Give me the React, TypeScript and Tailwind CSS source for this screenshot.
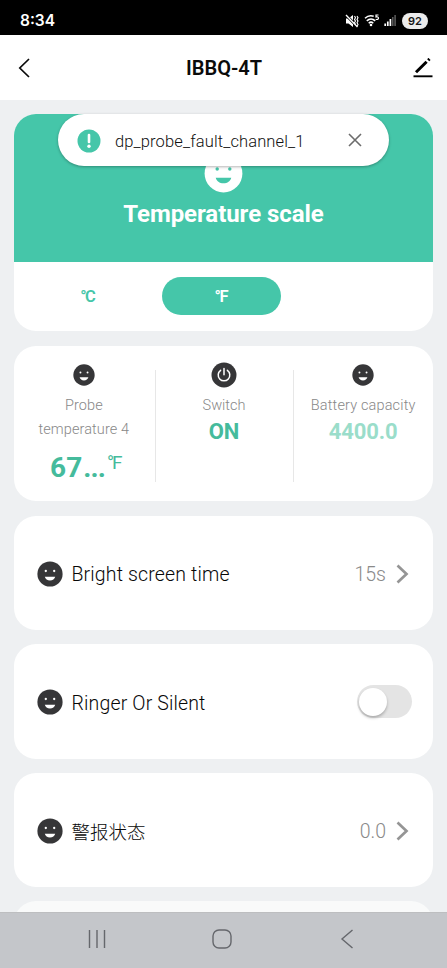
import React from "react";

function Smiley({ size, face = "#fff", fill = "#363638" }: { size: number; face?: string; fill?: string }) {
  return (
    <svg width={size} height={size} viewBox="0 0 26 26" className="block shrink-0">
      <circle cx="13" cy="13" r="12.6" fill={fill} />
      <circle cx="8.8" cy="10" r="1.15" fill={face} />
      <circle cx="17.2" cy="10" r="1.15" fill={face} />
      <path d="M7.8 15.800h10.400c-.6 2.300-2.500 3.700-5.200 3.700s-4.600-1.400-5.200-3.700z" fill={face} />
    </svg>
  );
}

function StatusBar() {
  return (
    <div className="flex h-[35px] items-center justify-between bg-black pt-[6px] pr-[19px] pl-[20px] text-white">
      <span className="font-['Inter',sans-serif] text-[15.500px] leading-5 font-semibold">8:34</span>
      <div className="flex items-center">
        <svg width="14" height="14" viewBox="0 0 14 14" className="mr-[5px]">
          <path d="M1 4.500h2.500L8 1v12L3.500 9.500H1z" fill="#fff" />
          <path d="M1 1l11.500 12" stroke="#000" strokeWidth="2.600" />
          <path d="M1 1l11.500 12" stroke="#fff" strokeWidth="1.400" />
          <path d="M9.500 2l1 1.700-1 1.700 1 1.700-1 1.700 1 1.700M12 2l1 1.700-1 1.700 1 1.700-1 1.700 1 1.700-1 1.700" fill="none" stroke="#fff" strokeWidth="1.100" />
        </svg>
        <svg width="16" height="13" viewBox="0 0 16 13" className="mr-[4px]">
          <path d="M1 4.300C3.800 1.500 7 1.200 9.700 2.200M2.800 6.900c2.500-2.400 6-2.400 8.400 0M4.700 9.200c1.400-1.300 3.200-1.300 4.600 0" fill="none" stroke="#fff" strokeWidth="1.500" />
          <circle cx="7" cy="11" r="1.300" fill="#fff" />
          <path d="M14.500 1H12v2c1.500-.5 2.500 0 2.500 1.200S13 5.800 11.700 5.200" fill="none" stroke="#fff" strokeWidth="1.200" />
        </svg>
        <svg width="12" height="13" viewBox="0 0 12 13" className="mr-[6px]">
          <path d="M1.200 12V9.500M3.800 12V7.500M6.400 12V5" stroke="#fff" strokeWidth="1.700" />
          <path d="M8.800 12V3M11.100 12V1" stroke="#5c5c5c" strokeWidth="1.500" />
        </svg>
        <span className="flex h-[16px] w-[26px] items-center justify-center rounded-full bg-[#ececec] pt-px font-['Inter',sans-serif] text-[11px] font-semibold text-[#161616]">92</span>
      </div>
    </div>
  );
}

function Header() {
  return (
    <header className="flex h-[65px] items-center justify-between bg-white pr-[14px] pl-[17px]">
      <svg width="20" height="20" viewBox="0 0 20 20" fill="none" stroke="#0a0a0a" strokeWidth="1.700">
        <path d="M12 1L2.800 10 12 19" />
      </svg>
      <h1 className="mr-[2px] text-[20px] leading-6 font-semibold text-[#0b0b0b]">IBBQ-4T</h1>
      <svg width="20" height="20" viewBox="0 0 20 20" fill="none" stroke="#000">
        <path d="M3 14.200L13.600 3.800M15.200 2.200l1.300-1.300" strokeWidth="3" />
        <path d="M0.500 18.300h19" strokeWidth="1.900" />
      </svg>
    </header>
  );
}

function Toast() {
  return (
    <div className="absolute top-[114px] left-[58px] flex h-[52px] w-[331px] items-center rounded-full bg-white pr-[27px] pl-[19px] shadow-[0_1px_3px_rgba(0,0,0,0.3)]">
      <svg width="24" height="24" viewBox="0 0 24 24" className="mt-[2px]">
        <circle cx="12" cy="12" r="11.500" fill="#45c6a9" />
        <path d="M12 6v7" stroke="#fff" strokeWidth="2.600" strokeLinecap="round" />
        <circle cx="12" cy="17.300" r="1.700" fill="#fff" />
      </svg>
      <span className="mt-[4px] ml-[14px] flex-1 text-[16.500px] font-light tracking-[0.120px] whitespace-nowrap text-[#111]">dp_probe_fault_channel_1</span>
      <svg width="14" height="14" viewBox="0 0 14 14" stroke="#6c6c6c" strokeWidth="1.600">
        <path d="M1 1l12 12M13 1L1 13" />
      </svg>
    </div>
  );
}

function ScaleCard() {
  return (
    <section className="h-[217px] overflow-hidden rounded-[22px] bg-white">
      <div className="flex h-[148px] flex-col items-center bg-[#45c6a9] pt-[40px]">
        <Smiley size={39} fill="#fff" face="#45c6a9" />
        <h2 className="mt-[6px] text-[24px] leading-[30px] font-bold tracking-[-0.050px] text-white">Temperature scale</h2>
      </div>
      <div className="flex pt-[15px] pl-[14px] text-[16.500px] font-semibold">
        <button className="h-[38px] w-[120px] pt-[2px] text-[#45c6a9]"><span className="tracking-[-1.500px]">°</span>C</button>
        <button className="ml-[14px] h-[38px] w-[119px] rounded-full bg-[#45c6a9] pt-[2px] text-white"><span className="tracking-[-1.500px]">°</span>F</button>
      </div>
    </section>
  );
}

function Readings() {
  return (
    <section className="mt-[15px] grid h-[155px] grid-cols-3 rounded-[22px] bg-white text-center text-[14.500px] leading-6 font-light text-[#888]">
      <div className="flex flex-col items-center pt-[18px]">
        <Smiley size={22} />
        <div className="mt-[8px] tracking-[0.100px]">Probe<br />temperature 4</div>
        <div className="mt-[8px] flex items-start pl-[5px] text-[#45bb9c]">
          <span className="text-[28px] leading-[36px] font-bold">67<span className="ml-[1px] tracking-[-0.900px]">...</span></span>
          <span className="ml-[2px] pt-[1px] text-[19px] leading-6 font-normal"><span className="tracking-[-2px]">°</span>F</span>
        </div>
      </div>
      <div className="mt-[24px] mb-[19px] ml-px -mr-px flex flex-col items-center border-x border-[#e7e7e7]">
        <svg width="26" height="26" viewBox="0 0 26 26" className="-mt-[8px] shrink-0" fill="none" stroke="#fff" strokeWidth="1.500" strokeLinecap="round">
          <circle cx="13" cy="13" r="12.500" fill="#363638" stroke="none" />
          <path d="M9.600 8.300a5.800 5.800 0 1 0 6.800 0M13 6.500v6.200" />
        </svg>
        <div className="mt-[6px] mr-px">Switch</div>
        <div className="mt-0 mr-px text-[22px] leading-[28px] font-bold text-[#45bb9c]">ON</div>
      </div>
      <div className="flex flex-col items-center pt-[18px]">
        <Smiley size={22} />
        <div className="mt-[8px] tracking-[0.150px] whitespace-nowrap">Battery capacity</div>
        <div className="mt-0 text-[22px] leading-[28px] font-bold tracking-[-0.100px] text-[#9addca]">4400.0</div>
      </div>
    </section>
  );
}

function Row({ label, children, className = "", labelClass = "mt-[2px] text-[19.500px] font-light tracking-[0.150px]" }: { label: string; children: React.ReactNode; className?: string; labelClass?: string }) {
  return (
    <section className={"flex h-[114.500px] items-center rounded-[22px] bg-white pt-[2px] pr-[21px] pl-[23px] " + className}>
      <Smiley size={26} />
      <span className={"ml-[8.500px] flex-1 text-[#080808] " + labelClass}>{label}</span>
      {children}
    </section>
  );
}

function Value({ text }: { text: string }) {
  return (
    <div className="flex items-center pr-[3px] text-[19.500px] font-light text-[#8a8a8a]">
      <span className="mt-[2px]">{text}</span>
      <svg width="13" height="20" viewBox="0 0 13 20" fill="none" stroke="#959595" strokeWidth="2.700" className="ml-[10px]">
        <path d="M1.500 1.500L10.500 10l-9 8.500" />
      </svg>
    </div>
  );
}

function NavBar() {
  return (
    <nav className="flex h-[56px] shrink-0 items-start border-t border-[#bdbec0] bg-[#c4c6ca] pt-[16px] pl-[87px]">
      <svg width="20" height="20" viewBox="0 0 20 20" stroke="#65676c" strokeWidth="1.400">
        <path d="M2.500 1v18M10 1v18M17.500 1v18" />
      </svg>
      <svg width="20" height="20" viewBox="0 0 20 20" fill="none" stroke="#65676c" strokeWidth="1.400" className="ml-[105px]">
        <rect x="1" y="1" width="18" height="18" rx="6" />
      </svg>
      <svg width="20" height="20" viewBox="0 0 20 20" fill="none" stroke="#65676c" strokeWidth="1.400" className="ml-[107px]">
        <path d="M13.500 1L3 10l10.500 9" />
      </svg>
    </nav>
  );
}

export default function App() {
  return (
    <div className="relative flex h-[968px] w-[447px] flex-col overflow-hidden bg-[#eef0f2] font-['Roboto','Noto_Sans_CJK_SC',sans-serif]">
      <StatusBar />
      <Header />
      <main className="min-h-0 flex-1 overflow-hidden px-[14px] pt-[14px]">
        <ScaleCard />
        <Readings />
        <Row label="Bright screen time" className="mt-[14.500px]"><Value text="15s" /></Row>
        <Row label="Ringer Or Silent" className="mt-[14px]">
          <div className="-mt-px flex h-[33px] w-[55px] items-center rounded-full bg-[#e4e4e4] pl-[2px]">
            <div className="h-[28px] w-[28px] rounded-full bg-white shadow-[0_2px_3px_rgba(0,0,0,0.25)]" />
          </div>
        </Row>
        <Row label="警报状态" className="mt-[14px]" labelClass="mt-[7px] text-[18.500px] font-light"><Value text="0.0" /></Row>
        <section className="mt-[14px] h-[114px] rounded-[22px] bg-[#f9fafa]" />
      </main>
      <NavBar />
      <Toast />
    </div>
  );
}
